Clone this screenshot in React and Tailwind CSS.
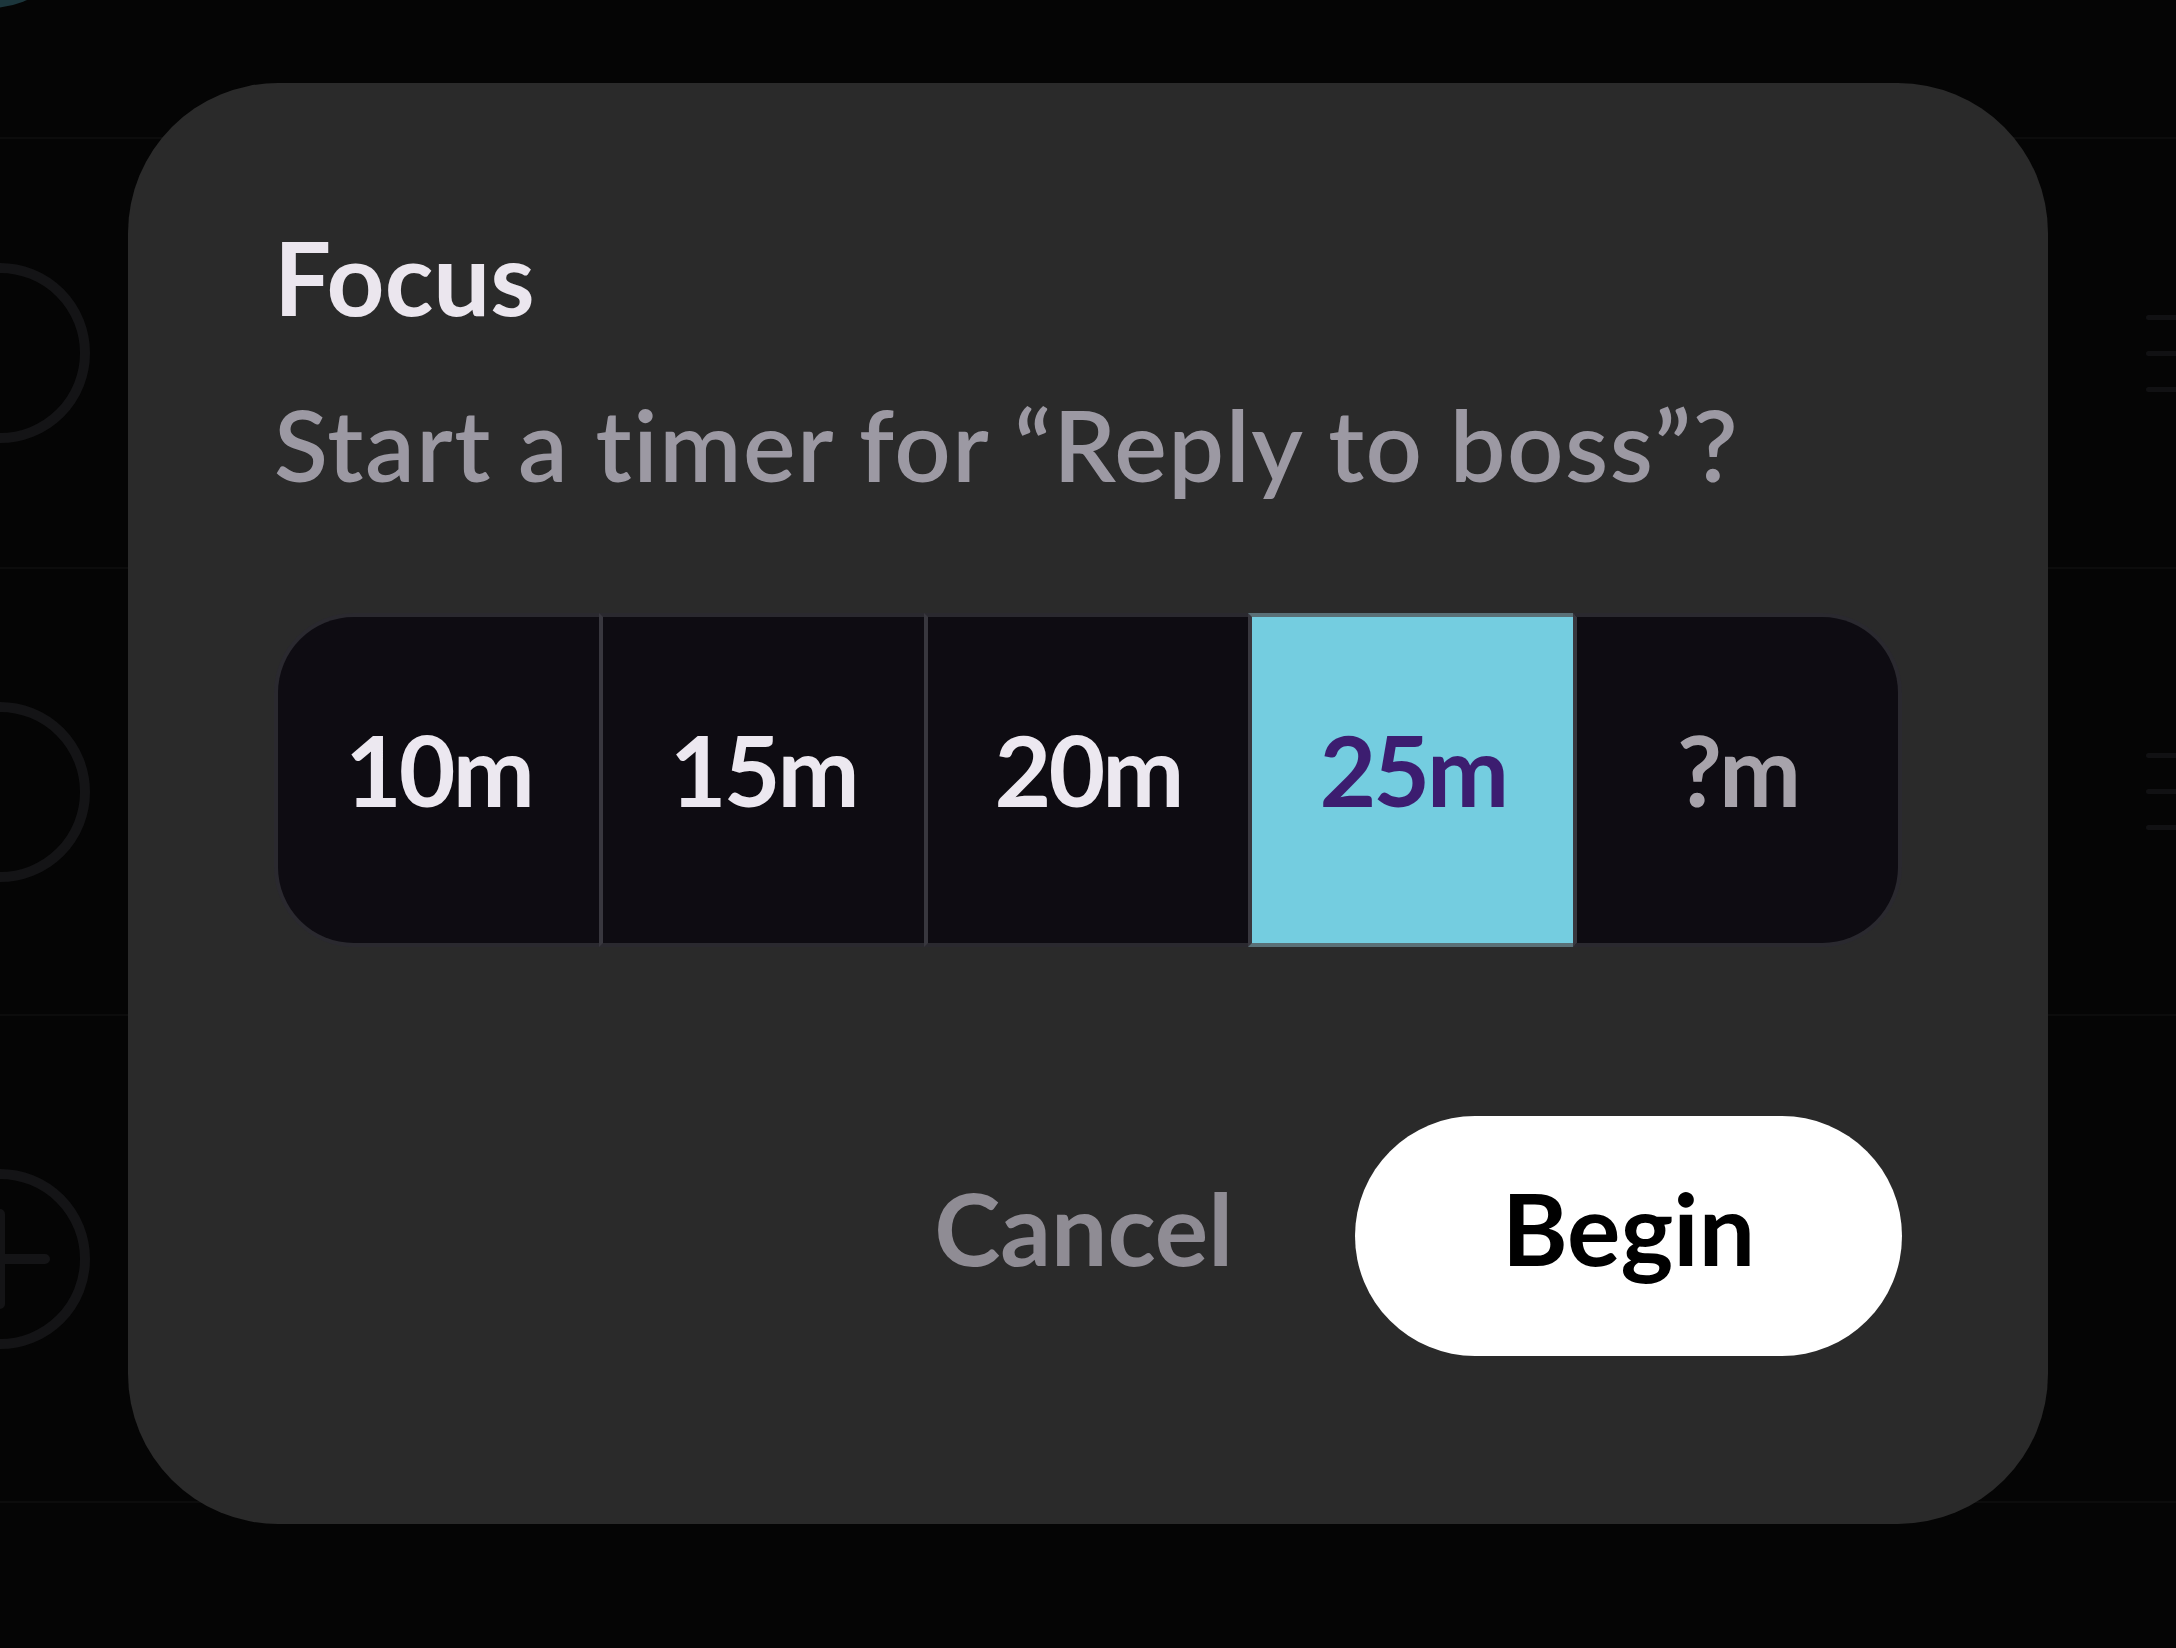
import { useState } from 'react';

const durations = ['10m', '15m', '20m', '25m', '?m'];

const rows = [
  { h: 'h-[430px]', icon: 'circle' },
  { h: 'h-[447px]', icon: 'circle' },
  { h: 'h-[487px]', icon: 'plus' },
];

const BackgroundList = () => (
  <div className="flex flex-col">
    {/* header strip with the cut-off teal circle */}
    <div className="relative h-[139px] border-b-2 border-[#0c0c0c]">
      <div className="absolute -top-[172px] -left-[100px] w-[180px] h-[180px] rounded-full border-[10px] border-[#1c363c]"></div>
    </div>
    {rows.map((row, i) => (
      <div key={i} className={`${row.h} flex items-center justify-between border-b-2 border-[#0c0c0c]`}>
        <div className="-ml-[90px] w-[180px] h-[180px] rounded-full border-[10px] border-[#141416] flex items-center justify-center">
          {row.icon === 'plus' && (
            <svg width="110" height="110" viewBox="0 0 110 110" className="text-[#141416]">
              <path d="M55 10v90M10 55h90" stroke="currentColor" strokeWidth="10" strokeLinecap="round" />
            </svg>
          )}
        </div>
        {row.icon !== 'plus' && (
          <div className="flex flex-col gap-[31px] -mr-[10px]">
            <div className="w-[40px] h-[5px] rounded-full bg-[#111113]"></div>
            <div className="w-[40px] h-[5px] rounded-full bg-[#111113]"></div>
            <div className="w-[40px] h-[5px] rounded-full bg-[#111113]"></div>
          </div>
        )}
      </div>
    ))}
  </div>
);

const DurationPicker = ({ value, onChange }) => (
  <div className="flex h-[334px] w-full">
    {durations.map((d, i) => {
      const selected = value === d;
      const first = i === 0;
      const last = i === durations.length - 1;
      return (
        <button
          key={d}
          onClick={() => onChange(d)}
          className={[
            'flex-1 flex items-center justify-center pb-[22px] border-y-[4px] text-[98px] leading-[120px] font-bold tracking-[-3px]',
            first ? 'rounded-l-[80px] border-l-[4px] border-l-[#2a292f]' : 'border-l-[4px] border-l-[#38373e]',
            last ? 'rounded-r-[80px] border-r-[4px] border-r-[#2a292f]' : '',
            selected
              ? 'bg-[#74cde0] text-[#3c1d70] border-y-[#5a7077]'
              : 'bg-[#0e0c12] border-y-[#2a292f]',
            !selected && d === '?m' ? 'text-[#a7a3ab]' : '',
            !selected && d !== '?m' ? 'text-[#ece8f0]' : '',
          ].join(' ')}
        >
          {d}
        </button>
      );
    })}
  </div>
);

export default function App() {
  const [duration, setDuration] = useState('25m');

  return (
    <div className="relative w-[2176px] h-[1648px] overflow-hidden bg-[#050505] font-[Lato,sans-serif]">
      <BackgroundList />

      {/* Focus dialog */}
      <div className="absolute inset-0 flex justify-center items-start pt-[83px]">
        <div className="w-[1920px] rounded-[150px] bg-[#2a2a2a] px-[146px] pt-[134px] pb-[168px] flex flex-col">
          <h2 className="text-[101px] leading-[120px] font-bold text-[#ebe6ee]">Focus</h2>
          <p className="mt-[47px] text-[99px] leading-[120px] font-semibold tracking-[1.5px] [font-variant-ligatures:none] text-[#9c99a3]">
            Start a timer for “Reply to boss”?
          </p>

          <div className="mt-[109px]">
            <DurationPicker value={duration} onChange={setDuration} />
          </div>

          <div className="mt-[169px] flex items-center justify-end">
            <button className="mr-[122px] pb-[18px] text-[100px] leading-[120px] font-bold text-[#8f8c94]">
              Cancel
            </button>
            <button className="w-[547px] h-[240px] rounded-full bg-white pb-[18px] text-[100px] leading-[120px] font-bold text-black">
              Begin
            </button>
          </div>
        </div>
      </div>
    </div>
  );
}
